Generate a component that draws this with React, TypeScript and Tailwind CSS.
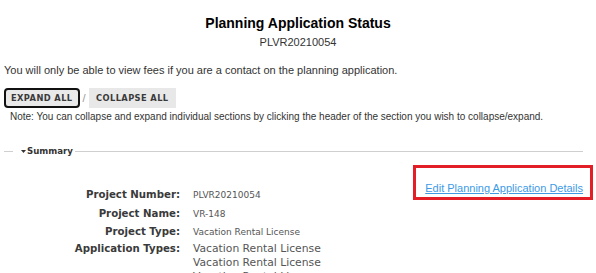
import React from "react";

const arial = { fontFamily: '"Liberation Sans", Arial, sans-serif' };

export default function App() {
  return (
    <div
      className="w-[596px] h-[273px] overflow-hidden bg-white px-[4px] text-[#333]"
      style={arial}
    >
      <h1 className="pt-[15px] text-center text-[14px] leading-[17px] font-bold text-black">
        Planning Application Status
      </h1>
      <div className="mt-[4px] text-center text-[11px] leading-[13px] text-[#333]">
        PLVR20210054
      </div>
      <p className="mt-[15px] text-[11px] leading-[13px] text-[#333]">
        You will only be able to view fees if you are a contact on the planning application.
      </p>
      <div
        className="mt-[11px] flex items-center font-['DejaVu_Sans',sans-serif] text-[8.3px] font-bold tracking-[0.4px]"
      >
        <button className="h-[20px] rounded-[4px] border-2 border-[#111] bg-[#e9e9e9] px-[5px] leading-[16px] text-[#3a3a3a]">
          EXPAND ALL
        </button>
        <span className="mx-[3px] font-['Liberation_Sans',sans-serif] text-[11px] font-normal text-[#999]">
          /
        </span>
        <button className="h-[20px] bg-[#e8e8e8] px-[7px] leading-[20px] text-[#3a3a3a]">
          COLLAPSE ALL
        </button>
      </div>
      <p className="mt-[2.5px] pl-[6px] text-[10px] leading-[12px] text-[#333]">
        Note: You can collapse and expand individual sections by clicking the header of the section you wish to collapse/expand.
      </p>

      <div className="w-[579px]">
        <div className="mt-[22.5px] flex h-[12px] items-center">
          <div className="h-px w-[9px] bg-[#cfcfcf]" />
          <svg className="ml-[8px]" width="5" height="3" viewBox="0 0 5 3">
            <path d="M0 0 H5 L2.5 3 Z" fill="#333" />
          </svg>
          <span className="ml-[1px] font-['DejaVu_Sans',sans-serif] text-[8.6px] font-bold leading-[12px] text-[#333]">
            Summary
          </span>
          <div className="ml-[2px] h-px flex-1 bg-[#cfcfcf]" />
        </div>

        <div className="mt-[18px] flex h-[12px] justify-end">
          <div className="relative">
            <a
              href="#"
              className="text-[11px] leading-[12px] text-[#3d9be6] underline"
            >
              Edit Planning Application Details
            </a>
            <div className="pointer-events-none absolute -top-[10px] -left-[12px] -right-[10px] -bottom-[13px] border-[3.5px] border-[#e41e26]" />
          </div>
        </div>

        <div className="-mt-[1px] font-['DejaVu_Sans',sans-serif]">
          <div className="flex h-[18.5px] items-baseline">
            <div className="w-[176px] text-right text-[10.2px] leading-[18px] font-bold text-[#3a3a3a]">
              Project Number:
            </div>
            <div className="ml-[13px] text-[9px] text-[#555]">PLVR20210054</div>
          </div>
          <div className="flex h-[18px] items-baseline">
            <div className="w-[176px] text-right text-[10.2px] leading-[18px] font-bold text-[#3a3a3a]">
              Project Name:
            </div>
            <div className="ml-[13px] text-[9px] text-[#555]">VR-148</div>
          </div>
          <div className="flex h-[17px] items-baseline">
            <div className="w-[176px] text-right text-[10.2px] leading-[18px] font-bold text-[#3a3a3a]">
              Project Type:
            </div>
            <div className="ml-[13px] text-[9px] text-[#555]">Vacation Rental License</div>
          </div>
          <div className="flex items-baseline">
            <div className="w-[176px] text-right text-[10.2px] leading-[18px] font-bold text-[#3a3a3a]">
              Application Types:
            </div>
            <div className="ml-[13px] text-[10.75px] leading-[14px] text-[#555]">
              <div>Vacation Rental License</div>
              <div>Vacation Rental License</div>
              <div>Vacation Rental License</div>
            </div>
          </div>
        </div>
      </div>
    </div>
  );
}
